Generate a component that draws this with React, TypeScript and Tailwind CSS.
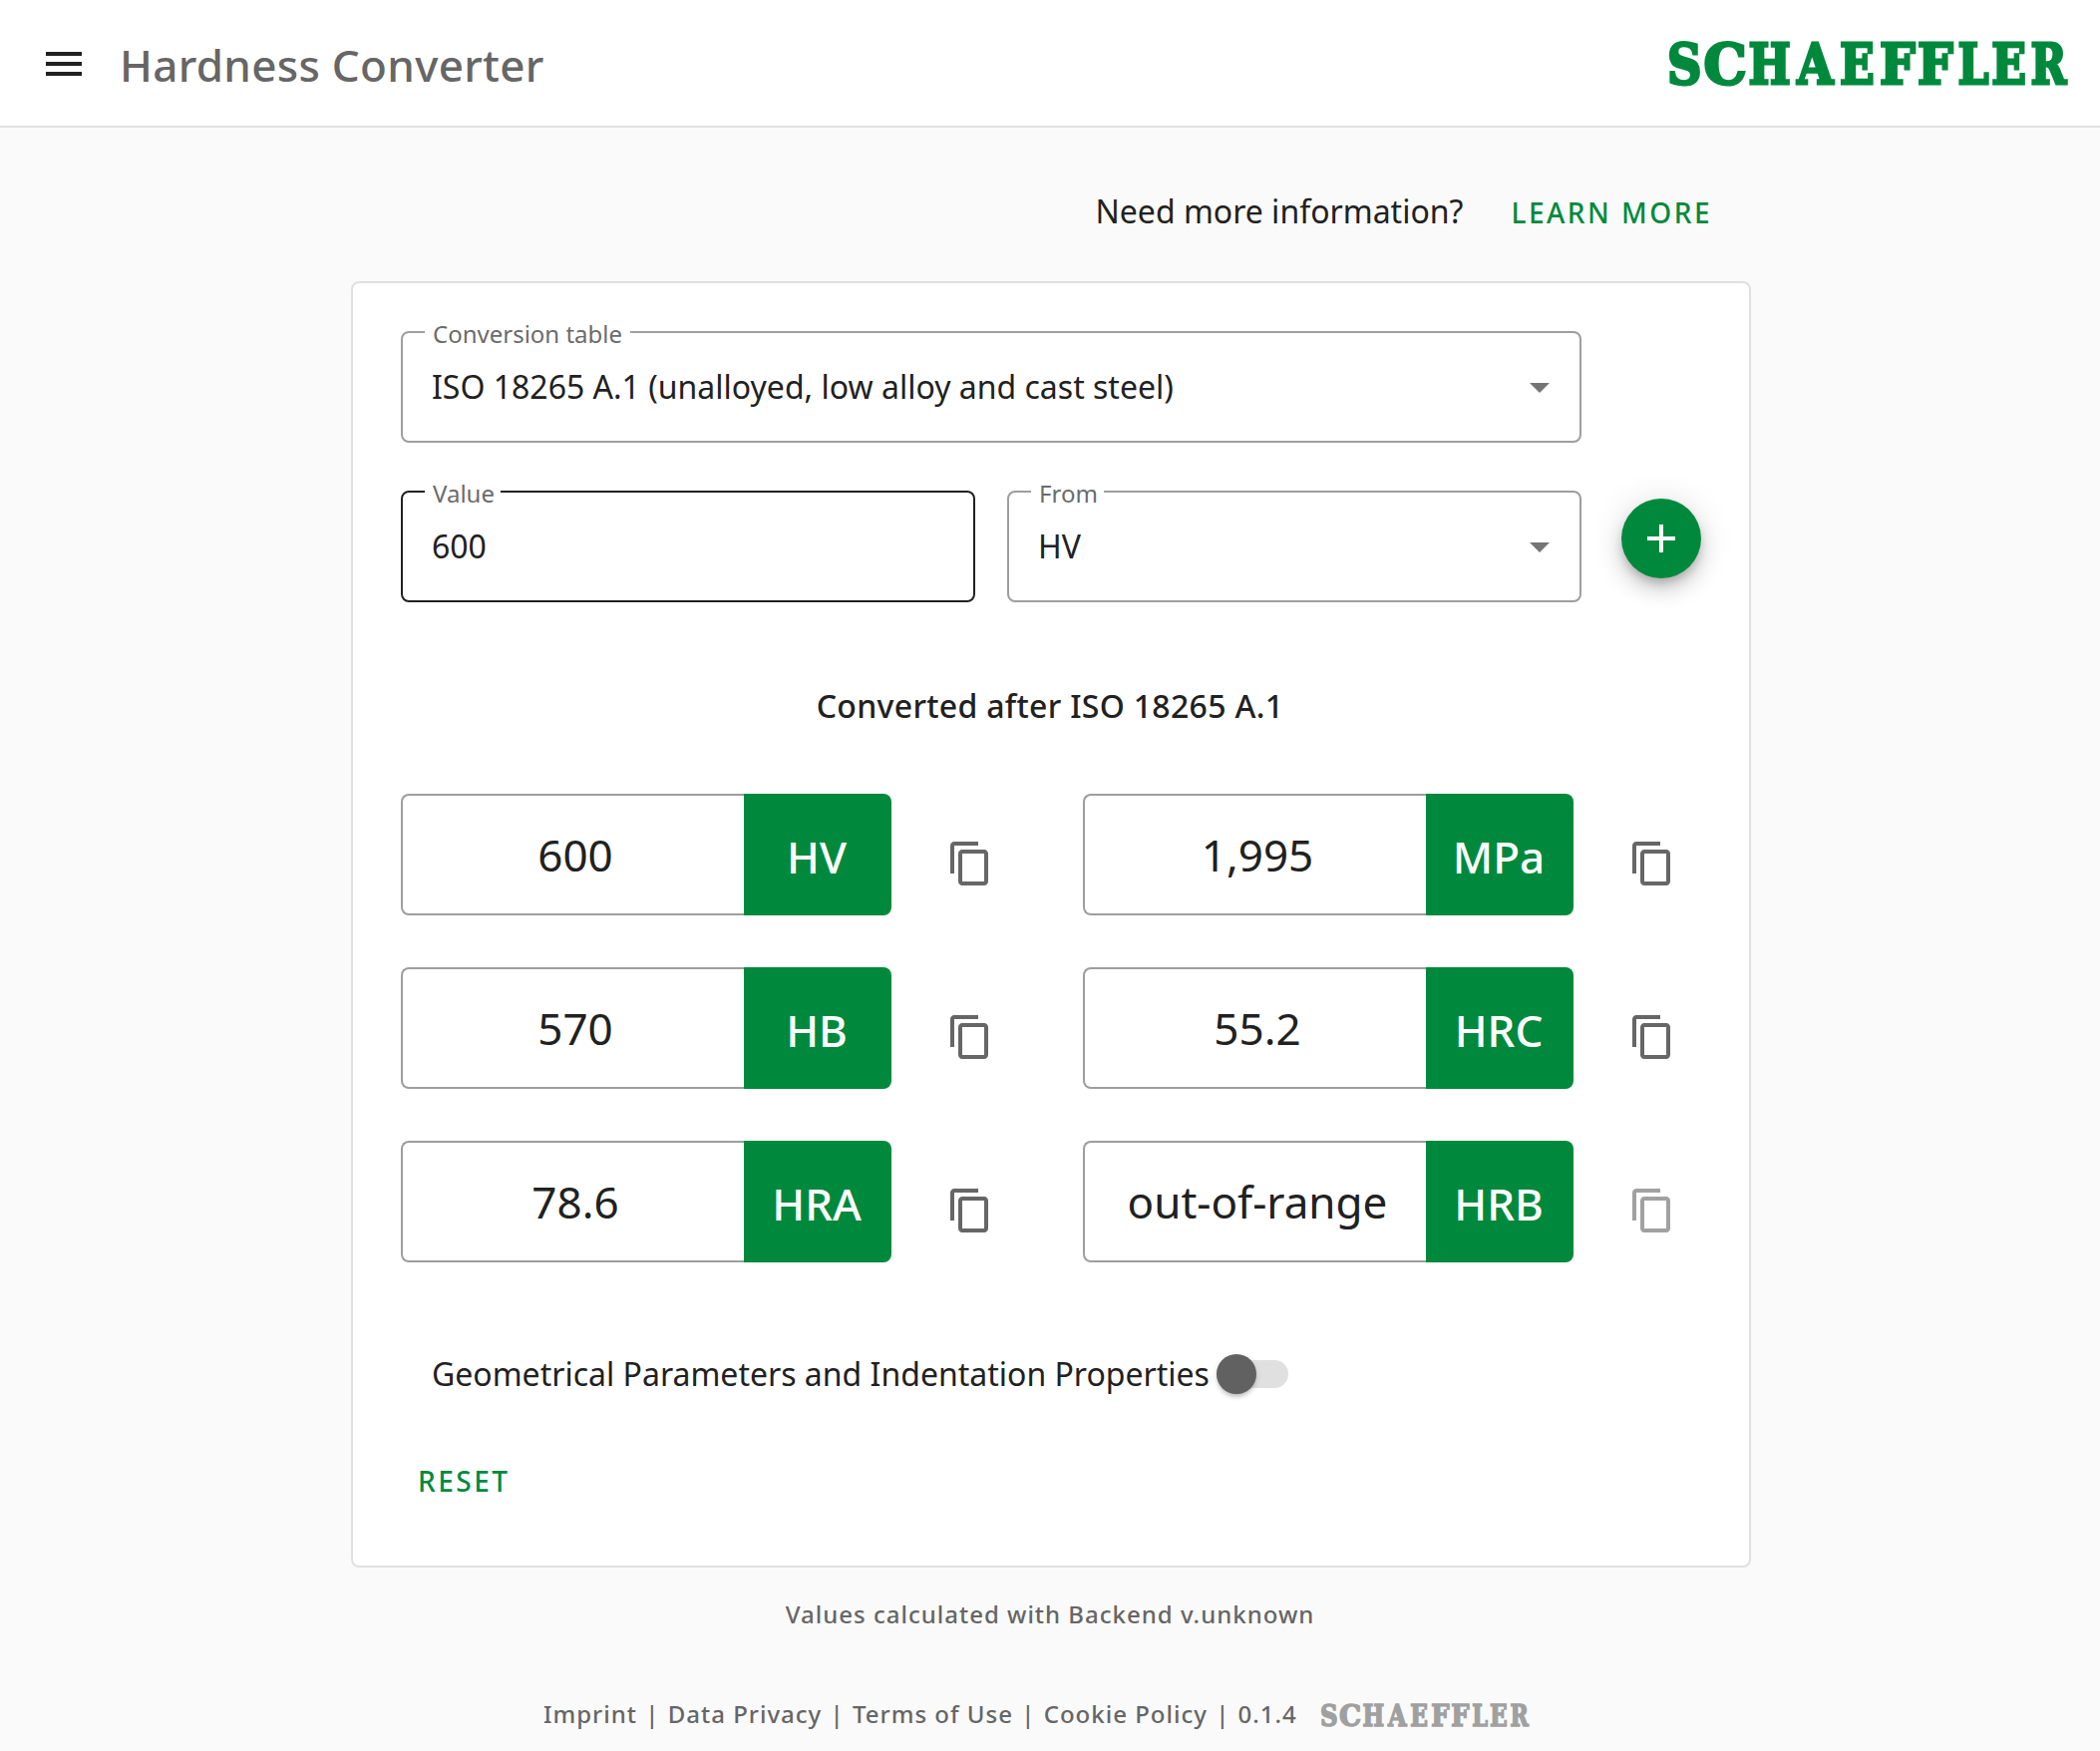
import { Fragment, type ReactNode } from 'react';
import { MdAdd, MdContentCopy, MdMenu } from 'react-icons/md';

// Start and advance of every letter in the wordmark.
const LETTERS = [
  { char: 'S', x: -2, width: 34.5 },
  { char: 'C', x: 34.5, width: 43.2 },
  { char: 'H', x: 79.4, width: 42.2 },
  { char: 'A', x: 128.2, width: 36.3 },
  { char: 'E', x: 171, width: 34.7 },
  { char: 'F', x: 211.1, width: 35.7 },
  { char: 'F', x: 249.1, width: 35.7 },
  { char: 'L', x: 289.4, width: 31 },
  { char: 'E', x: 323.3, width: 34.7 },
  { char: 'R', x: 362.5, width: 35.8 },
];

function Wordmark({ className }: { className: string }) {
  return (
    <svg viewBox="0 0 400 46" preserveAspectRatio="none" className={className} role="img" aria-label="Schaeffler">
      <text
        y="43.6"
        fontFamily="'DejaVu Serif', serif"
        fontWeight="700"
        fontSize="56.2"
        stroke="currentColor"
        strokeWidth="3"
        fill="currentColor"
      >
        {LETTERS.map((l, i) => (
          <tspan key={i} x={l.x} textLength={l.width} lengthAdjust="spacingAndGlyphs">
            {l.char}
          </tspan>
        ))}
      </text>
    </svg>
  );
}

function Field({ label, children, select, active, short }: { label: string; children: ReactNode; select?: boolean; active?: boolean; short?: boolean }) {
  return (
    <div
      className={
        'relative flex h-28 items-center justify-between rounded-lg border-2 pr-[30px] pl-[29px] ' +
        (active ? 'border-[#212121]' : 'border-[#9e9e9e]')
      }
    >
      <span
        className={
          'absolute -top-[17px] left-[22px] bg-white pl-2 text-[24px] leading-9 text-[#6b6b6b] ' + (short ? 'pr-1.5' : 'pr-2')
        }
      >
        {label}
      </span>
      <span className="text-[32px] leading-10">{children}</span>
      {select && (
        <svg viewBox="0 0 20 10" className="mt-0.5 h-[10px] w-5 fill-[#757575]">
          <path d="M0 0h20L10 10z" />
        </svg>
      )}
    </div>
  );
}

const results = [
  { value: '600', unit: 'HV' },
  { value: '1,995', unit: 'MPa' },
  { value: '570', unit: 'HB' },
  { value: '55.2', unit: 'HRC' },
  { value: '78.6', unit: 'HRA' },
  { value: 'out-of-range', unit: 'HRB', disabled: true },
];

function Result({ value, unit, disabled }: { value: string; unit: string; disabled?: boolean }) {
  return (
    <div className="flex h-[122px] items-center">
      <div className="flex h-full w-[344px] items-center justify-center rounded-l-lg border-2 border-r-0 border-[#9e9e9e] pl-1 text-[44px] leading-[60px]">
        <span>{value}</span>
      </div>
      <div className="flex h-full w-[148px] items-center justify-center rounded-r-lg bg-[#00893d] pt-[3px] pr-[2px] text-[44px] leading-[60px] font-medium text-white">
        {unit}
      </div>
      <MdContentCopy className={'mt-[18px] ml-[55px] size-12 ' + (disabled ? 'text-[#a1a1a1]' : 'text-[#666666]')} />
    </div>
  );
}

const footerItems = ['Imprint', 'Data Privacy', 'Terms of Use', 'Cookie Policy', '0.1.4'];

export default function App() {
  return (
    <div className="flex min-h-screen flex-col bg-[#fafafa] font-['Noto_Sans',sans-serif] text-[#212121]">
      <header className="flex h-32 items-center border-b-2 border-[#e0e0e0] bg-white pr-8 pl-10">
        <MdMenu className="mt-0.5 size-12" />
        <h1 className="mt-1 ml-8 text-[44px] leading-[60px] font-medium tracking-[0.3px] text-[#666666]">Hardness Converter</h1>
        <Wordmark className="ml-auto h-[46px] w-[400px] overflow-visible text-[#00893d]" />
      </header>

      <main className="mx-auto flex w-[1404px] translate-x-px flex-col">
        <div className="mt-12 mb-[34px] flex h-[72px] items-center justify-end pr-[39px]">
          <span className="text-[32px] leading-10">Need more information?</span>
          <a className="mt-px ml-12 text-[28px] leading-10 font-medium tracking-[2.5px] text-[#00893d]">LEARN MORE</a>
        </div>

        <section className="flex h-[1290px] flex-col rounded-lg border-2 border-[#e0e0e0] bg-white p-12">
          <div className="flex justify-between">
            <div className="grid w-[1184px] grid-cols-2 gap-x-8 gap-y-12">
              <div className="col-span-2">
                <Field label="Conversion table" select>
                  ISO 18265 A.1 (unalloyed, low alloy and cast steel)
                </Field>
              </div>
              <Field label="Value" active short>600</Field>
              <Field label="From" select short>HV</Field>
            </div>
            <button className="mt-[168px] flex size-20 items-center justify-center rounded-full bg-[#00893d] text-white shadow-[0_6px_10px_-2px_rgba(0,0,0,0.2),0_12px_20px_0_rgba(0,0,0,0.14),0_2px_36px_0_rgba(0,0,0,0.12)]">
              <MdAdd className="size-12" />
            </button>
          </div>

          <h2 className="mt-[84px] pr-[2px] text-center text-[32px] leading-10 font-medium tracking-[0.3px]">
            Converted after ISO 18265 A.1
          </h2>

          <div className="mt-[68px] grid grid-cols-[684px_1fr] gap-y-[52px]">
            {results.map((r) => (
              <Result key={r.unit} {...r} />
            ))}
          </div>

          <div className="mt-[92px] ml-[31px] flex h-10 items-center">
            <span className="text-[32px] leading-10">Geometrical Parameters and Indentation Properties</span>
            <span className="ml-[7px] flex h-7 w-[72px] items-center rounded-full bg-[#e0e0e0]">
              <span className="size-10 shrink-0 rounded-full bg-[#616161] shadow-[0_4px_4px_-2px_rgba(0,0,0,0.2),0_2px_6px_0_rgba(0,0,0,0.14)]" />
            </span>
          </div>

          <button className="mt-[67px] ml-[17px] self-start text-[28px] leading-10 font-medium tracking-[2.5px] text-[#00893d]">RESET</button>
        </section>

        <p className="mt-[27px] pr-[2px] text-center text-[24px] leading-10 font-medium tracking-[1px] text-[#666666]">
          Values calculated with Backend v.unknown
        </p>
      </main>

      <footer className="mt-[60px] ml-[545px] flex items-center text-[24px] leading-10 font-medium tracking-[1px] text-[#666666]">
        <span>
          {footerItems.map((item, i) => (
            <Fragment key={item}>
              {i > 0 && <span className="px-px"> | </span>}
              {item}
            </Fragment>
          ))}
        </span>
        <Wordmark className="mt-0.5 ml-6 h-6 w-[209px] overflow-visible text-[#a0a0a0]" />
      </footer>
    </div>
  );
}
